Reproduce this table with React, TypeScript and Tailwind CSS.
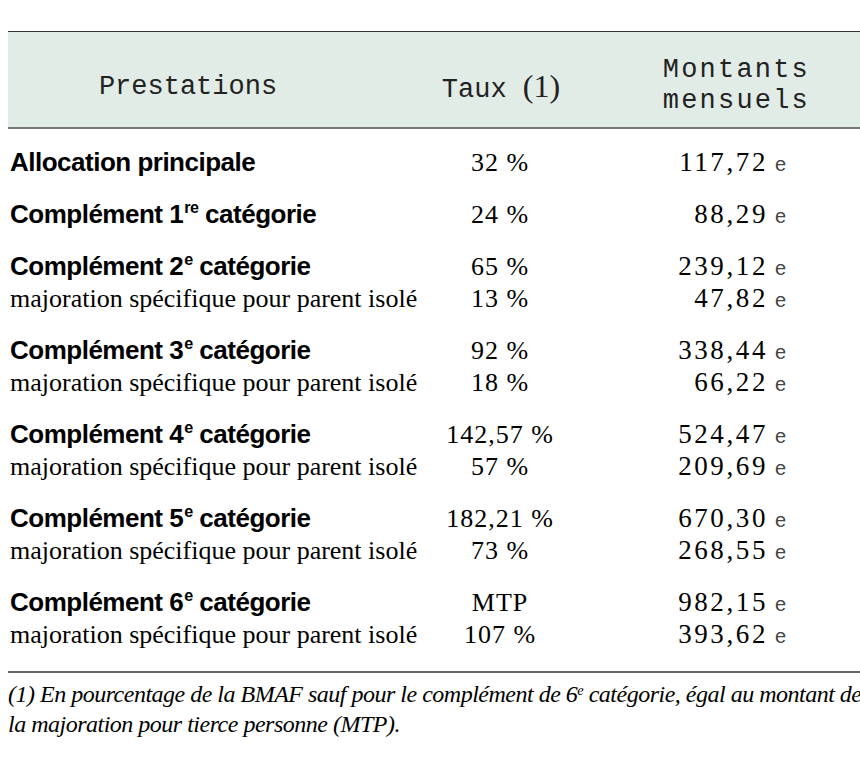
const serif = "font-['Liberation_Serif','DejaVu_Serif',serif]";
const sans = "font-['Liberation_Sans',Arial,sans-serif]";
const mono = "font-['Liberation_Mono','Courier_New',monospace]";

type Line = { label: React.ReactNode; bold: boolean; taux: string; montant: string };

function Sup({ children }: { children: React.ReactNode }) {
  return <sup className="text-[0.62em] top-[-0.6em] ml-[1px]">{children}</sup>;
}

const groups: Line[][] = [
  [{ label: "Allocation principale", bold: true, taux: "32 %", montant: "117,72" }],
  [
    {
      label: (
        <>
          Complément 1<Sup>re</Sup> catégorie
        </>
      ),
      bold: true,
      taux: "24 %",
      montant: "88,29",
    },
  ],
  ...[
    ["2", "65 %", "239,12", "13 %", "47,82"],
    ["3", "92 %", "338,44", "18 %", "66,22"],
    ["4", "142,57 %", "524,47", "57 %", "209,69"],
    ["5", "182,21 %", "670,30", "73 %", "268,55"],
    ["6", "MTP", "982,15", "107 %", "393,62"],
  ].map(([n, t1, m1, t2, m2]) => [
    {
      label: (
        <>
          Complément {n}
          <Sup>e</Sup> catégorie
        </>
      ),
      bold: true,
      taux: t1,
      montant: m1,
    },
    { label: "majoration spécifique pour parent isolé", bold: false, taux: t2, montant: m2 },
  ]),
];

function Row({ line }: { line: Line }) {
  return (
    <div className="grid grid-cols-[420px_140px_218px] h-[32px] items-center">
      <div
        className={
          line.bold
            ? `${sans} font-bold text-[26px] tracking-[-0.5px] text-black whitespace-nowrap`
            : `${serif} text-[26px] text-black whitespace-nowrap`
        }
      >
        {line.label}
      </div>
      <div className={`${serif} text-[26px] tracking-[1px] text-center text-black whitespace-nowrap`}>
        {line.taux}
      </div>
      <div className="flex items-baseline justify-end">
        <span className={`${serif} text-[27px] tracking-[2.6px] text-black`}>{line.montant}</span>
        <span className={`${sans} text-[20px] text-[#444] ml-[7px] w-[13px]`}>e</span>
      </div>
    </div>
  );
}

export default function App() {
  return (
    <div className="w-[860px] h-[758px] bg-white overflow-hidden pt-[31px] pl-2">
      <div className="border-t border-[#333] border-b-2 border-b-[#777] bg-[#e2ece7] h-[98px] grid grid-cols-[360px_266px_176px] items-center text-[#222]">
        <div className={`${mono} text-[27px] text-center pt-[15px]`}>Prestations</div>
        <div className="text-center whitespace-nowrap pt-[13px]">
          <span className={`${mono} text-[27px]`}>Taux </span>
          <span className={`${serif} text-[32px]`}>(1)</span>
        </div>
        <div className={`${mono} text-[27px] text-right leading-[31px] tracking-[2.2px] pt-[12px]`}>
          Montants
          <br />
          mensuels
        </div>
      </div>
      <div className="pl-[2px] pt-[13px] pb-[25px] flex flex-col gap-[20px]">
        {groups.map((g, i) => (
          <div key={i}>
            {g.map((line, j) => (
              <Row key={j} line={line} />
            ))}
          </div>
        ))}
      </div>
      <div className="border-t-2 border-[#666]" />
      <div
        className={`${serif} italic text-[24px] leading-[30px] tracking-[-0.5px] text-black whitespace-nowrap pt-[6px]`}
      >
        (1) En pourcentage de la BMAF sauf pour le complément de 6<sup className="text-[0.6em]">e</sup> catégorie,
        égal au montant de
        <br />
        la majoration pour tierce personne (MTP).
      </div>
    </div>
  );
}
